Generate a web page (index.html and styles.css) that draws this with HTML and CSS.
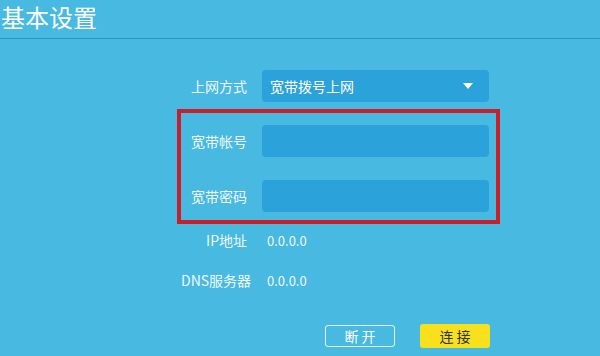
FILE: index.html
```html
<!DOCTYPE html>
<html>
<head>
  <title>基本设置</title>
  <link rel="stylesheet" href="styles.css">
</head>
<body>
  <header>
    <h1>基本设置</h1>
  </header>

  <div class="form">
    <div class="row">
      <label>上网方式</label>
      <div class="select">
        <span>宽带拨号上网</span>
        <span class="arrow"></span>
      </div>
    </div>

    <div class="highlight">
      <div class="row">
        <label for="account">宽带帐号</label>
        <input type="text" id="account">
      </div>
      <div class="row">
        <label for="password">宽带密码</label>
        <input type="password" id="password">
      </div>
    </div>

    <div class="row info">
      <label>IP地址</label>
      <span class="value">0.0.0.0</span>
    </div>
    <div class="row info">
      <label>DNS服务器</label>
      <span class="value">0.0.0.0</span>
    </div>

    <div class="buttons">
      <button class="btn-outline">断 开</button>
      <button class="btn-primary">连 接</button>
    </div>
  </div>
</body>
</html>
```

FILE: styles.css
```css
body {
  font-family: "Noto Sans CJK SC", "Liberation Sans", sans-serif;
  background-color: #48b9e0;
  color: #eef8fc;
  margin: 0;
  padding: 0;
}

header {
  height: 38px;
  border-bottom: 1px solid #2a95c6;
}

h1 {
  margin: 0;
  padding: 2px 0 0 1px;
  font-size: 24px;
  font-weight: normal;
  line-height: 30px;
  color: #ffffff;
}

.form {
  margin-left: 177px;
  width: 323px;
  padding-top: 31px;
}

.row {
  display: flex;
  align-items: center;
  padding: 0 4px;
  height: 32px;
}

label {
  width: 66px;
  margin-right: 15px;
  text-align: right;
  font-size: 14px;
  white-space: nowrap;
}

.select,
input[type="text"],
input[type="password"] {
  box-sizing: border-box;
  width: 227px;
  height: 32px;
  border: none;
  border-radius: 4px;
  background-color: #2ba2d9;
  margin: 0;
}

.select {
  display: flex;
  align-items: center;
  justify-content: space-between;
  padding: 0 16px 0 8px;
  font-size: 14px;
  color: #ffffff;
}

.arrow {
  width: 0;
  height: 0;
  border-left: 5px solid transparent;
  border-right: 5px solid transparent;
  border-top: 6px solid #ffffff;
}

.highlight {
  margin-top: 7px;
  border: 4px solid #c81f2b;
  padding: 12px 3px 8px 0;
  display: flex;
  flex-direction: column;
  gap: 23px;
}

.highlight .row {
  padding: 0 4px 0 0;
}

.info + .info {
  margin-top: 8px;
}

.value {
  margin-left: 5px;
  font-size: 13px;
}

.buttons {
  display: flex;
  align-items: center;
  gap: 25px;
  margin-top: 28px;
  padding-left: 148px;
}

button {
  width: 70px;
  font-family: inherit;
  font-size: 14px;
  border-radius: 3px;
  cursor: pointer;
}

.btn-outline {
  height: 22px;
  padding: 0;
  background: transparent;
  border: 1px solid #e6f6fc;
  color: #ffffff;
}

.btn-primary {
  height: 24px;
  padding: 0;
  background-color: #f8e01c;
  border: none;
  color: #333333;
}
```
